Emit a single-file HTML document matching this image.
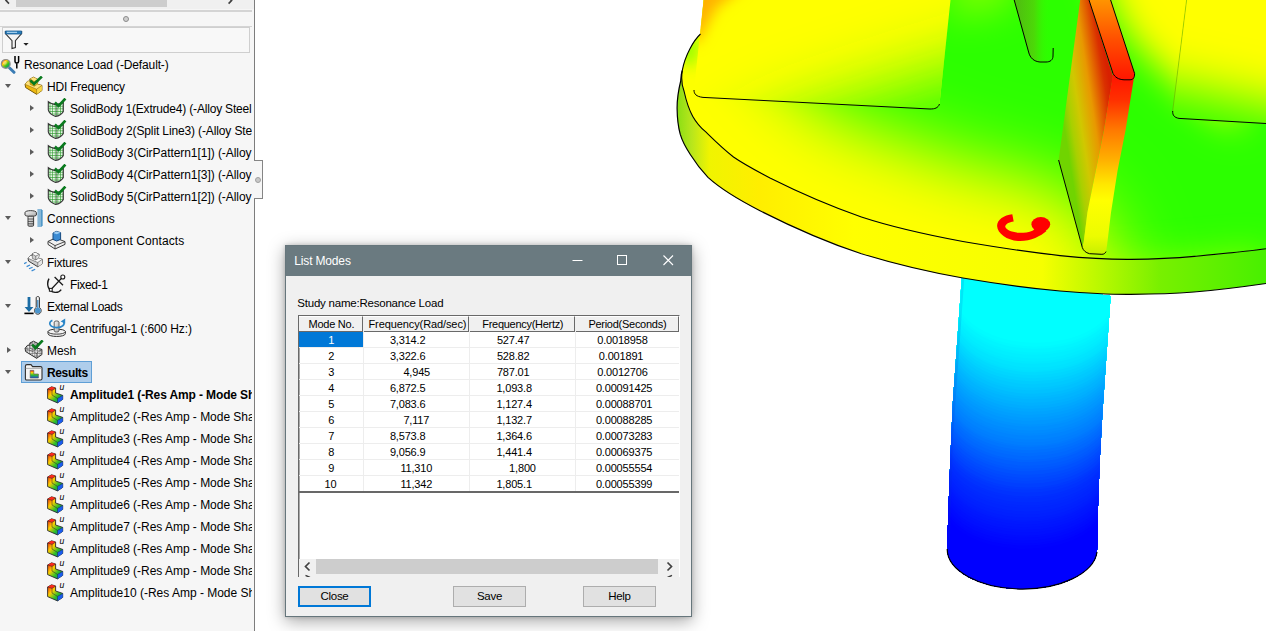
<!DOCTYPE html>
<html lang="en">
<head>
<meta charset="utf-8">
<title>Resonance Load - List Modes</title>
<style>
html,body{margin:0;padding:0;}
body{width:1266px;height:631px;overflow:hidden;background:#fff;position:relative;font-family:"Liberation Sans",sans-serif;color:#000;}
#scene{position:absolute;left:0;top:0;width:1266px;height:631px;}
/* ---------- left panel ---------- */
#panel{position:absolute;left:0;top:0;width:254px;height:631px;background:#f6f6f6;border-right:1px solid #7d7d7d;overflow:hidden;}
#hscroll{position:absolute;left:0;top:0;width:254px;height:9px;background:#f0f0f0;}
#hscroll .thumb{position:absolute;left:16px;top:0;width:151px;height:7px;background:#cdcdcd;}
.hline{position:absolute;left:0;width:252px;height:2px;background:#d4d4d4;}
#grip{position:absolute;left:123px;top:16px;width:4px;height:4px;border:1px solid #8c8c8c;border-radius:50%;background:#cfcfcf;}
#filter{position:absolute;left:2px;top:27px;width:246px;height:24px;border:1px solid #cfcfcf;background:#f8f8f8;}
.row{position:absolute;left:0;width:252px;overflow:hidden;height:22px;line-height:22px;white-space:nowrap;font-size:12px;}
.row .t{position:absolute;top:1px;}
.row .b{font-weight:bold;}
.ic{position:absolute;width:18px;height:18px;}
.exp{position:absolute;width:0;height:0;}
.exp.open{border-left:3.5px solid transparent;border-right:3.5px solid transparent;border-top:4px solid #5c5c5c;}
.exp.closed{border-top:3.5px solid transparent;border-bottom:3.5px solid transparent;border-left:4px solid #5c5c5c;}
#sel{position:absolute;left:21px;top:361px;width:69px;height:20px;background:#aecdeb;border:1px solid #5f9fd6;}
#tab{position:absolute;left:254px;top:160px;width:7.5px;height:37px;background:#f6f6f6;border:1.5px solid #858585;border-left:none;}#tab:after{content:"";position:absolute;left:1px;top:16px;width:4px;height:4px;border-radius:50%;background:#c8c8c8;border:1px solid #a0a0a0;}
/* ---------- dialog ---------- */
#dlg{position:absolute;left:285px;top:245px;width:405px;height:370px;background:#f0f0f0;border:1px solid #66767c;box-shadow:0 4px 16px rgba(0,0,0,.36),0 0 4px rgba(0,0,0,.18);}
#title{position:absolute;left:0;top:0;width:405px;height:30px;background:#6a7a80;color:#fff;font-size:12px;line-height:30px;}
#title span{position:absolute;left:8.3px;top:0;white-space:nowrap;letter-spacing:-.16px;}
#study{position:absolute;left:11.3px;top:50px;font-size:11.5px;line-height:14px;white-space:nowrap;letter-spacing:-.22px;}
#list{position:absolute;left:12px;top:69px;width:380px;height:261px;background:#fff;border-left:1px solid #696969;border-top:1px solid #696969;border-right:1px solid #fff;overflow:hidden;font-size:11px;}
#list:before{content:"";position:absolute;left:0;top:0;width:1px;height:261px;background:#a8a8a8;}
.hd{position:absolute;top:0;height:14px;background:#f0f0f0;border-right:1px solid #696969;border-bottom:1px solid #696969;border-top:1px solid #fff;}
.ht{position:absolute;top:1px;height:14px;line-height:14px;white-space:nowrap;text-align:center;}
.c{position:absolute;height:14px;line-height:14px;white-space:nowrap;letter-spacing:-.17px;}
.c.w{color:#fff;}
.selc{position:absolute;background:#0078d7;}
.rl{position:absolute;left:0;width:380px;height:1px;background:#ededed;}
.cl{position:absolute;top:15px;width:1px;height:160px;background:#ededed;}
.endl{position:absolute;left:0;width:380px;height:1.5px;background:#686868;}
#sb{position:absolute;left:0;top:243px;width:380px;height:18px;background:#f0f0f0;}
#sb .thumb{position:absolute;left:17px;top:0;width:342px;height:14.5px;background:#cdcdcd;}
.btn{position:absolute;height:19px;width:71px;border:1px solid #adadad;background:#e1e1e1;font-size:11.5px;line-height:19px;text-align:center;letter-spacing:-.3px;}
.btn.def{border:2px solid #0078d7;}
</style>
</head>
<body>
<svg id="scene" width="1266" height="631" viewBox="0 0 1266 631">
<!--SCENE-->
<defs>
  <filter id="bl30" filterUnits="userSpaceOnUse" x="400" y="-300" width="1100" height="900"><feGaussianBlur stdDeviation="36"/></filter>
  <filter id="bl18" filterUnits="userSpaceOnUse" x="400" y="-300" width="1100" height="900"><feGaussianBlur stdDeviation="18"/></filter>
  <filter id="bl26" filterUnits="userSpaceOnUse" x="400" y="-300" width="1100" height="900"><feGaussianBlur stdDeviation="26"/></filter>
  <filter id="bl12" filterUnits="userSpaceOnUse" x="400" y="-300" width="1100" height="900"><feGaussianBlur stdDeviation="12"/></filter>
  <filter id="bl8" filterUnits="userSpaceOnUse" x="400" y="-300" width="1100" height="900"><feGaussianBlur stdDeviation="7"/></filter>
  <filter id="bl4" x="-30%" y="-30%" width="160%" height="160%"><feGaussianBlur stdDeviation="3"/></filter>
  <!-- top surface of disc -->
  <clipPath id="cpTop">
    <path id="pTop" d="M700.5,34 C694,40 685,55 682.2,70.8 C681,80 682,86 684,91 C686,100 688,108 692.8,116.4 C696,122 700,127 705.5,131.7 C714,140 723,149 733.5,157 C745,165 757,171 770,178 C800,193 830,206 861.4,217 C895,228 928,235 962.9,241.5 C995,247 1028,252 1060,255.6 C1084,258 1108,259.6 1130.8,259.4 C1152,259.2 1173,258.4 1194.3,256.4 C1218,254.2 1242,252 1266,248.8 L1266,0 L703.6,0 Z"/>
  </clipPath>
  <!-- side (thickness) of disc -->
  <clipPath id="cpSide">
    <path id="pSide" d="M682.2,70.8 C681,74 681,78 680.7,81 C678.5,90 677,100 677.1,108.8 C677.2,118 678,126 680.2,134.2 C682.5,142 686,148 690.3,154.5 C695,162 701,170 708,177.4 C723,191 741,201 760,210.7 C792,227 826,242 861.4,253.8 C895,264 928,272 962.9,278 C995,283.5 1028,288 1060,291 C1084,293 1108,294.6 1130.8,294.4 C1152,294.2 1173,293.6 1194,292 C1218,290 1242,287 1266,283.5 L1266,248.8 C1242,252 1218,254.2 1194.3,256.4 C1173,258.4 1152,259.2 1130.8,259.4 C1108,259.6 1084,258 1060,255.6 C1028,252 995,247 962.9,241.5 C928,235 895,228 861.4,217 C830,206 800,193 770,178 C757,171 745,165 733.5,157 C723,149 714,140 705.5,131.7 C700,127 696,122 692.8,116.4 C688,108 686,100 684,91 C682,86 681,80 682.2,70.8 Z"/>
  </clipPath>
  <clipPath id="cpLBlock"><path id="pLBlock" d="M703.6,0 L694,90 C694,94 696,96.5 703,97.4 L930,109 C935,109 938,108 939.5,104 L950.5,0 Z"/></clipPath>
  <clipPath id="cpRBlock"><path id="pRBlock" d="M1186.6,0 L1172.7,111 C1172.5,115 1174,117.5 1179,118.4 L1266,123.5 L1266,0 Z"/></clipPath>
  <clipPath id="cpCyl"><path id="pCyl" d="M962,275 L953,400 Q949.6,470 947.2,549 A75,40 0 0 0 1097,552 Q1098,480 1102.6,410 L1110.6,296 Z"/></clipPath>
  <linearGradient id="gCyl" gradientUnits="userSpaceOnUse" x1="0" y1="280" x2="0" y2="590">
    <stop offset="0" stop-color="#00ffff"/>
    <stop offset="0.17" stop-color="#00f4ff"/>
    <stop offset="0.29" stop-color="#00c8ff"/>
    <stop offset="0.41" stop-color="#0090ff"/>
    <stop offset="0.56" stop-color="#0058ff"/>
    <stop offset="0.70" stop-color="#0030ff"/>
    <stop offset="0.88" stop-color="#0004ff"/>
    <stop offset="1" stop-color="#0000ff"/>
  </linearGradient>
  <linearGradient id="gCylEdge" gradientUnits="userSpaceOnUse" x1="948" y1="0" x2="1108" y2="0">
    <stop offset="0" stop-color="#0030ff" stop-opacity=".55"/>
    <stop offset="0.22" stop-color="#0030ff" stop-opacity="0"/>
    <stop offset="0.8" stop-color="#0030ff" stop-opacity="0"/>
    <stop offset="1" stop-color="#0030ff" stop-opacity=".35"/>
  </linearGradient>
  <linearGradient id="gSide" gradientUnits="userSpaceOnUse" x1="677" y1="0" x2="1266" y2="0">
    <stop offset="0" stop-color="#8ade14"/>
    <stop offset="0.025" stop-color="#b8e61c"/>
    <stop offset="0.055" stop-color="#f0f400"/>
    <stop offset="0.14" stop-color="#ffee00"/>
    <stop offset="0.3" stop-color="#ffff00"/>
    <stop offset="0.62" stop-color="#f6ff00"/>
    <stop offset="0.72" stop-color="#b8f800"/>
    <stop offset="0.82" stop-color="#78f000"/>
    <stop offset="1" stop-color="#48f000"/>
  </linearGradient>
  <linearGradient id="gFinSide" gradientUnits="userSpaceOnUse" x1="1060" y1="100" x2="1111" y2="92">
    <stop offset="0" stop-color="#70d400"/>
    <stop offset="0.15" stop-color="#a8d000"/>
    <stop offset="0.33" stop-color="#d0c800"/>
    <stop offset="0.6" stop-color="#e89800"/>
    <stop offset="0.76" stop-color="#e26000"/>
    <stop offset="0.9" stop-color="#da3000"/>
    <stop offset="1" stop-color="#d82000"/>
  </linearGradient>
  <linearGradient id="gFinFront" gradientUnits="userSpaceOnUse" x1="0" y1="76" x2="0" y2="254">
    <stop offset="0" stop-color="#ff1400"/>
    <stop offset="0.135" stop-color="#ff3000"/>
    <stop offset="0.30" stop-color="#ff7800"/>
    <stop offset="0.47" stop-color="#ffb000"/>
    <stop offset="0.61" stop-color="#ffe800"/>
    <stop offset="0.70" stop-color="#ffff00"/>
    <stop offset="0.9" stop-color="#ecfc00"/>
    <stop offset="1" stop-color="#c8f000"/>
  </linearGradient>
  <linearGradient id="gFinTop" gradientUnits="userSpaceOnUse" x1="0" y1="0" x2="0" y2="78">
    <stop offset="0" stop-color="#ff9400"/>
    <stop offset="0.5" stop-color="#ff5000"/>
    <stop offset="1" stop-color="#ff1800"/>
  </linearGradient>
  <linearGradient id="gBackFin" gradientUnits="userSpaceOnUse" x1="1018" y1="0" x2="1050" y2="0">
    <stop offset="0" stop-color="#50c010"/>
    <stop offset="0.5" stop-color="#4cd808"/>
    <stop offset="1" stop-color="#30ff00" stop-opacity="0"/>
  </linearGradient>
</defs>

<!-- cylinder (stem) -->
<g clip-path="url(#cpCyl)">
  <rect x="940" y="270" width="180" height="330" fill="#00ffff"/>
  <path d="M959.1,222.0 A80.7,50.0 0 0 0 1120.2,225.0 L1130,640 L930,640 Z" fill="#00ffff"/>
  <path d="M958.9,225.0 A80.7,50.0 0 0 0 1120.1,228.0 L1130,640 L930,640 Z" fill="#00ffff"/>
  <path d="M958.8,228.0 A80.7,50.0 0 0 0 1119.9,231.0 L1130,640 L930,640 Z" fill="#00ffff"/>
  <path d="M958.6,231.0 A80.7,50.0 0 0 0 1119.8,234.0 L1130,640 L930,640 Z" fill="#00ffff"/>
  <path d="M958.4,234.0 A80.7,50.0 0 0 0 1119.6,237.0 L1130,640 L930,640 Z" fill="#00ffff"/>
  <path d="M958.3,237.0 A80.7,50.0 0 0 0 1119.4,240.0 L1130,640 L930,640 Z" fill="#00ffff"/>
  <path d="M958.1,240.0 A80.7,50.0 0 0 0 1119.3,243.0 L1130,640 L930,640 Z" fill="#00ffff"/>
  <path d="M957.9,243.0 A80.7,50.0 0 0 0 1119.1,246.0 L1130,640 L930,640 Z" fill="#00ffff"/>
  <path d="M957.8,246.0 A80.7,50.0 0 0 0 1119.0,249.0 L1130,640 L930,640 Z" fill="#00ffff"/>
  <path d="M957.6,249.0 A80.8,50.0 0 0 0 1118.8,252.0 L1130,640 L930,640 Z" fill="#00ffff"/>
  <path d="M957.4,252.0 A80.8,50.0 0 0 0 1118.7,255.0 L1130,640 L930,640 Z" fill="#00ffff"/>
  <path d="M957.3,255.0 A80.8,50.0 0 0 0 1118.5,258.0 L1130,640 L930,640 Z" fill="#00ffff"/>
  <path d="M957.1,258.0 A80.8,50.0 0 0 0 1118.3,261.0 L1130,640 L930,640 Z" fill="#00ffff"/>
  <path d="M956.9,261.0 A80.8,50.0 0 0 0 1118.2,264.0 L1130,640 L930,640 Z" fill="#00ffff"/>
  <path d="M956.8,264.0 A80.8,50.0 0 0 0 1118.0,267.0 L1130,640 L930,640 Z" fill="#00ffff"/>
  <path d="M956.6,267.0 A80.8,50.0 0 0 0 1117.9,270.0 L1130,640 L930,640 Z" fill="#00ffff"/>
  <path d="M956.4,270.0 A80.8,50.0 0 0 0 1117.7,273.0 L1130,640 L930,640 Z" fill="#00ffff"/>
  <path d="M956.3,273.0 A80.8,50.0 0 0 0 1117.5,276.0 L1130,640 L930,640 Z" fill="#00ffff"/>
  <path d="M956.1,276.0 A80.8,50.0 0 0 0 1117.4,279.0 L1130,640 L930,640 Z" fill="#00ffff"/>
  <path d="M955.9,279.0 A80.8,50.0 0 0 0 1117.2,282.0 L1130,640 L930,640 Z" fill="#00ffff"/>
  <path d="M955.8,282.0 A80.8,50.0 0 0 0 1117.1,285.0 L1130,640 L930,640 Z" fill="#00ffff"/>
  <path d="M955.6,285.0 A80.8,50.0 0 0 0 1116.9,288.0 L1130,640 L930,640 Z" fill="#00ffff"/>
  <path d="M955.4,288.0 A80.8,50.0 0 0 0 1116.8,291.0 L1130,640 L930,640 Z" fill="#00ffff"/>
  <path d="M955.3,291.0 A80.8,50.0 0 0 0 1116.6,294.0 L1130,640 L930,640 Z" fill="#00ffff"/>
  <path d="M955.1,294.0 A80.8,50.0 0 0 0 1116.4,297.0 L1130,640 L930,640 Z" fill="#00fcff"/>
  <path d="M954.9,297.0 A80.8,50.0 0 0 0 1116.3,300.0 L1130,640 L930,640 Z" fill="#00f9ff"/>
  <path d="M954.8,300.0 A80.8,50.0 0 0 0 1116.1,303.0 L1130,640 L930,640 Z" fill="#00f5ff"/>
  <path d="M954.6,303.0 A80.8,50.0 0 0 0 1116.0,306.0 L1130,640 L930,640 Z" fill="#00f2ff"/>
  <path d="M954.5,306.0 A80.8,50.0 0 0 0 1115.8,309.0 L1130,640 L930,640 Z" fill="#00efff"/>
  <path d="M954.3,309.0 A80.8,50.0 0 0 0 1115.7,312.0 L1130,640 L930,640 Z" fill="#00ecff"/>
  <path d="M954.1,312.0 A80.8,50.0 0 0 0 1115.5,315.0 L1130,640 L930,640 Z" fill="#00e9ff"/>
  <path d="M954.0,315.0 A80.8,50.0 0 0 0 1115.3,318.0 L1130,640 L930,640 Z" fill="#00e5ff"/>
  <path d="M953.8,318.0 A80.8,50.0 0 0 0 1115.2,321.0 L1130,640 L930,640 Z" fill="#00e2ff"/>
  <path d="M953.6,321.0 A80.8,50.0 0 0 0 1115.0,324.0 L1130,640 L930,640 Z" fill="#00dfff"/>
  <path d="M953.5,324.0 A80.9,50.0 0 0 0 1114.9,327.0 L1130,640 L930,640 Z" fill="#00daff"/>
  <path d="M953.3,327.0 A80.9,50.0 0 0 0 1114.7,330.0 L1130,640 L930,640 Z" fill="#00d6ff"/>
  <path d="M953.1,330.0 A80.9,50.0 0 0 0 1114.5,333.0 L1130,640 L930,640 Z" fill="#00d2ff"/>
  <path d="M953.0,333.0 A80.9,50.0 0 0 0 1114.4,336.0 L1130,640 L930,640 Z" fill="#00cdff"/>
  <path d="M952.8,336.0 A80.9,50.0 0 0 0 1114.2,339.0 L1130,640 L930,640 Z" fill="#00c9ff"/>
  <path d="M952.6,339.0 A80.9,50.0 0 0 0 1114.1,342.0 L1130,640 L930,640 Z" fill="#00c5ff"/>
  <path d="M952.5,342.0 A80.9,50.0 0 0 0 1113.9,345.0 L1130,640 L930,640 Z" fill="#00c1ff"/>
  <path d="M952.3,345.0 A80.9,50.0 0 0 0 1113.8,348.0 L1130,640 L930,640 Z" fill="#00bcff"/>
  <path d="M952.1,348.0 A80.9,50.0 0 0 0 1113.6,351.0 L1130,640 L930,640 Z" fill="#00b8ff"/>
  <path d="M952.0,351.0 A80.9,50.0 0 0 0 1113.4,354.0 L1130,640 L930,640 Z" fill="#00b4ff"/>
  <path d="M951.8,354.0 A80.9,50.0 0 0 0 1113.3,357.0 L1130,640 L930,640 Z" fill="#00b0ff"/>
  <path d="M951.6,357.0 A80.9,50.0 0 0 0 1113.1,360.0 L1130,640 L930,640 Z" fill="#00acff"/>
  <path d="M951.5,360.0 A80.9,50.0 0 0 0 1113.0,363.0 L1130,640 L930,640 Z" fill="#00a7ff"/>
  <path d="M951.3,363.0 A80.9,50.0 0 0 0 1112.8,366.0 L1130,640 L930,640 Z" fill="#00a3ff"/>
  <path d="M951.1,366.0 A80.9,50.0 0 0 0 1112.6,369.0 L1130,640 L930,640 Z" fill="#009fff"/>
  <path d="M951.0,369.0 A80.9,50.0 0 0 0 1112.5,372.0 L1130,640 L930,640 Z" fill="#009bff"/>
  <path d="M950.8,372.0 A80.9,50.0 0 0 0 1112.3,375.0 L1130,640 L930,640 Z" fill="#0097ff"/>
  <path d="M950.6,375.0 A80.9,50.0 0 0 0 1112.2,378.0 L1130,640 L930,640 Z" fill="#0093ff"/>
  <path d="M950.5,378.0 A80.9,50.0 0 0 0 1112.0,381.0 L1130,640 L930,640 Z" fill="#008fff"/>
  <path d="M950.3,381.0 A80.9,50.0 0 0 0 1111.9,384.0 L1130,640 L930,640 Z" fill="#008bff"/>
  <path d="M950.1,384.0 A80.9,50.0 0 0 0 1111.7,387.0 L1130,640 L930,640 Z" fill="#0088ff"/>
  <path d="M950.0,387.0 A80.9,50.0 0 0 0 1111.5,390.0 L1130,640 L930,640 Z" fill="#0084ff"/>
  <path d="M949.8,390.0 A80.9,50.0 0 0 0 1111.4,393.0 L1130,640 L930,640 Z" fill="#0080ff"/>
  <path d="M949.6,393.0 A80.9,50.0 0 0 0 1111.2,396.0 L1130,640 L930,640 Z" fill="#007dff"/>
  <path d="M949.5,396.0 A80.9,50.0 0 0 0 1111.1,399.0 L1130,640 L930,640 Z" fill="#0079ff"/>
  <path d="M949.3,399.0 A81.0,50.0 0 0 0 1110.9,402.0 L1130,640 L930,640 Z" fill="#0075ff"/>
  <path d="M949.1,402.0 A81.0,50.0 0 0 0 1110.7,405.0 L1130,640 L930,640 Z" fill="#0070ff"/>
  <path d="M949.0,405.0 A81.0,50.0 0 0 0 1110.6,408.0 L1130,640 L930,640 Z" fill="#006cff"/>
  <path d="M948.8,408.0 A81.0,50.0 0 0 0 1110.4,411.0 L1130,640 L930,640 Z" fill="#0068ff"/>
  <path d="M948.6,411.0 A81.0,50.0 0 0 0 1110.3,414.0 L1130,640 L930,640 Z" fill="#0063ff"/>
  <path d="M948.5,414.0 A81.0,50.0 0 0 0 1110.1,417.0 L1130,640 L930,640 Z" fill="#005eff"/>
  <path d="M948.3,417.0 A81.0,50.0 0 0 0 1110.0,420.0 L1130,640 L930,640 Z" fill="#005aff"/>
  <path d="M948.1,420.0 A81.0,50.0 0 0 0 1109.8,423.0 L1130,640 L930,640 Z" fill="#0056ff"/>
  <path d="M948.0,423.0 A81.0,50.0 0 0 0 1109.6,426.0 L1130,640 L930,640 Z" fill="#0051ff"/>
  <path d="M947.8,426.0 A81.0,50.0 0 0 0 1109.5,429.0 L1130,640 L930,640 Z" fill="#004cff"/>
  <path d="M947.6,429.0 A81.0,50.0 0 0 0 1109.3,432.0 L1130,640 L930,640 Z" fill="#0048ff"/>
  <path d="M947.5,432.0 A81.0,50.0 0 0 0 1109.2,435.0 L1130,640 L930,640 Z" fill="#0044ff"/>
  <path d="M947.3,435.0 A81.0,50.0 0 0 0 1109.0,438.0 L1130,640 L930,640 Z" fill="#003fff"/>
  <path d="M947.1,438.0 A81.0,50.0 0 0 0 1108.9,441.0 L1130,640 L930,640 Z" fill="#003aff"/>
  <path d="M947.0,441.0 A81.0,50.0 0 0 0 1108.7,444.0 L1130,640 L930,640 Z" fill="#0036ff"/>
  <path d="M946.8,444.0 A81.0,50.0 0 0 0 1108.5,447.0 L1130,640 L930,640 Z" fill="#0032ff"/>
  <path d="M946.6,447.0 A81.0,50.0 0 0 0 1108.4,450.0 L1130,640 L930,640 Z" fill="#002eff"/>
  <path d="M946.5,450.0 A81.0,50.0 0 0 0 1108.2,453.0 L1130,640 L930,640 Z" fill="#002cff"/>
  <path d="M946.3,453.0 A81.0,50.0 0 0 0 1108.1,456.0 L1130,640 L930,640 Z" fill="#0029ff"/>
  <path d="M946.1,456.0 A81.0,50.0 0 0 0 1107.9,459.0 L1130,640 L930,640 Z" fill="#0027ff"/>
  <path d="M946.0,459.0 A81.0,50.0 0 0 0 1107.7,462.0 L1130,640 L930,640 Z" fill="#0025ff"/>
  <path d="M945.8,462.0 A81.0,50.0 0 0 0 1107.6,465.0 L1130,640 L930,640 Z" fill="#0022ff"/>
  <path d="M945.6,465.0 A81.0,50.0 0 0 0 1107.4,468.0 L1130,640 L930,640 Z" fill="#0020ff"/>
  <path d="M945.5,468.0 A81.0,50.0 0 0 0 1107.3,471.0 L1130,640 L930,640 Z" fill="#001dff"/>
  <path d="M945.3,471.0 A81.0,49.9 0 0 0 1107.1,474.0 L1130,640 L930,640 Z" fill="#001bff"/>
  <path d="M945.2,474.0 A81.1,49.5 0 0 0 1107.0,477.0 L1130,640 L930,640 Z" fill="#0018ff"/>
  <path d="M945.0,477.0 A81.1,49.1 0 0 0 1106.8,480.0 L1130,640 L930,640 Z" fill="#0016ff"/>
  <path d="M944.8,480.0 A81.1,48.8 0 0 0 1106.6,483.0 L1130,640 L930,640 Z" fill="#0014ff"/>
  <path d="M944.7,483.0 A81.1,48.4 0 0 0 1106.5,486.0 L1130,640 L930,640 Z" fill="#0011ff"/>
  <path d="M944.5,486.0 A81.1,48.0 0 0 0 1106.3,489.0 L1130,640 L930,640 Z" fill="#000fff"/>
  <path d="M944.3,489.0 A81.1,47.6 0 0 0 1106.2,492.0 L1130,640 L930,640 Z" fill="#000cff"/>
  <path d="M944.2,492.0 A81.1,47.2 0 0 0 1106.0,495.0 L1130,640 L930,640 Z" fill="#000aff"/>
  <path d="M944.0,495.0 A81.1,46.9 0 0 0 1105.8,498.0 L1130,640 L930,640 Z" fill="#0007ff"/>
  <path d="M943.8,498.0 A81.1,46.5 0 0 0 1105.7,501.0 L1130,640 L930,640 Z" fill="#0005ff"/>
  <path d="M943.7,501.0 A81.1,46.1 0 0 0 1105.5,504.0 L1130,640 L930,640 Z" fill="#0002ff"/>
  <path d="M943.5,504.0 A81.1,45.8 0 0 0 1105.4,507.0 L1130,640 L930,640 Z" fill="#0000ff"/>
  <path d="M943.3,507.0 A81.1,45.4 0 0 0 1105.2,510.0 L1130,640 L930,640 Z" fill="#0000ff"/>
  <path d="M943.2,510.0 A81.1,45.0 0 0 0 1105.1,513.0 L1130,640 L930,640 Z" fill="#0000ff"/>
  <path d="M943.0,513.0 A81.1,44.6 0 0 0 1104.9,516.0 L1130,640 L930,640 Z" fill="#0000ff"/>
  <path d="M942.8,516.0 A81.1,44.2 0 0 0 1104.7,519.0 L1130,640 L930,640 Z" fill="#0000ff"/>
  <path d="M942.7,519.0 A81.1,43.9 0 0 0 1104.6,522.0 L1130,640 L930,640 Z" fill="#0000ff"/>
  <path d="M942.5,522.0 A81.1,43.5 0 0 0 1104.4,525.0 L1130,640 L930,640 Z" fill="#0000ff"/>
  <path d="M942.3,525.0 A81.1,43.1 0 0 0 1104.3,528.0 L1130,640 L930,640 Z" fill="#0000ff"/>
  <path d="M942.2,528.0 A81.1,42.8 0 0 0 1104.1,531.0 L1130,640 L930,640 Z" fill="#0000ff"/>
  <path d="M942.0,531.0 A81.1,42.4 0 0 0 1103.9,534.0 L1130,640 L930,640 Z" fill="#0000ff"/>
  <path d="M941.8,534.0 A81.1,42.0 0 0 0 1103.8,537.0 L1130,640 L930,640 Z" fill="#0000ff"/>
  <path d="M941.7,537.0 A81.1,41.6 0 0 0 1103.6,540.0 L1130,640 L930,640 Z" fill="#0000ff"/>
  <path d="M941.5,540.0 A81.1,41.2 0 0 0 1103.5,543.0 L1130,640 L930,640 Z" fill="#0000ff"/>
  <path d="M941.3,543.0 A81.1,40.9 0 0 0 1103.3,546.0 L1130,640 L930,640 Z" fill="#0000ff"/>
  <path d="M941.2,546.0 A81.1,40.5 0 0 0 1103.2,549.0 L1130,640 L930,640 Z" fill="#0000ff"/>
  <path d="M941.0,549.0 A81.2,40.1 0 0 0 1103.0,552.0 L1130,640 L930,640 Z" fill="#0000ff"/>
  <path d="M940.8,552.0 A81.2,40.0 0 0 0 1102.8,555.0 L1130,640 L930,640 Z" fill="#0000ff"/>
  <path d="M940.7,555.0 A81.2,40.0 0 0 0 1102.7,558.0 L1130,640 L930,640 Z" fill="#0000ff"/>
  <path d="M940.5,558.0 A81.2,40.0 0 0 0 1102.5,561.0 L1130,640 L930,640 Z" fill="#0000ff"/>
  <path d="M962,275 L950.3,440 L947.2,549" fill="none" stroke="#0040c0" stroke-width="5" opacity=".13"/>
</g>
<path d="M947.2,549 A75,40 0 0 0 1097,552" fill="none" stroke="#000" stroke-width="1.2"/>

<!-- disc side -->
<g clip-path="url(#cpSide)">
  <rect x="670" y="60" width="600" height="240" fill="url(#gSide)"/>
</g>

<!-- disc top -->
<g clip-path="url(#cpTop)">
  <rect x="670" y="0" width="600" height="270" fill="#2cff00"/>
  <!-- yellow zone lower-left -->
  <path filter="url(#bl30)" fill="#ffff00" d="M560,-80 L690,-40 L780,70 L838,117 L902,139 L965,163 L1005,170 L1076,194 L1108,236 L1122,300 L1110,360 L560,360 Z"/>
  <!-- green sliver left of block -->
  <ellipse filter="url(#bl8)" cx="689" cy="50" rx="7" ry="16" fill="#60ff00" opacity=".8"/>
  <!-- yellowish tint bottom right edge -->
  <path filter="url(#bl18)" fill="#d8ff00" opacity=".5" d="M1060,266 L1140,262 L1266,250 L1266,300 L1060,300 Z"/>
  <!-- yellow at top between fins -->
  <path filter="url(#bl18)" fill="#ffff00" d="M1090,-70 L1240,-70 L1240,130 L1185,92 L1151,61 L1125,32 L1108,-4 Z"/>
  <path filter="url(#bl18)" fill="#b0ff00" opacity=".6" d="M950,-40 L1020,-40 L1010,8 L950,20 Z"/>
</g>

<!-- left block -->
<g clip-path="url(#cpLBlock)">
  <rect x="690" y="0" width="270" height="112" fill="#ffff00"/>
  <path filter="url(#bl30)" fill="#38ff00" d="M1110,24 L959,68 L810,116 L753,141 L710,186 L670,374 L1110,374 Z"/>
  <path filter="url(#bl8)" fill="#ffb000" d="M690,-14 L745,-14 L716,8 L698,42 L690,42 Z"/>
</g>

<!-- right block -->
<g clip-path="url(#cpRBlock)">
  <rect x="1170" y="0" width="100" height="126" fill="#34ff00"/>
  <path filter="url(#bl26)" fill="#ffff00" d="M1100,-120 L1400,-120 L1400,134 L1266,106 L1172,86 L1100,70 Z"/>
</g>
<path d="M1186.6,0 L1172.7,111" fill="none" stroke="#6a9000" stroke-width=".8" opacity=".55"/>

<!-- small back fin -->
<path d="M1014.2,0 L1028.6,52 C1030,58 1034,61.5 1040,62 L1046,62 C1050,62 1053,60 1053,56 L1053,0 Z" fill="url(#gBackFin)"/>
<path d="M1014.2,0 L1028.6,52 C1030,58 1034,61.5 1040,62 L1046,62 C1050,62 1053,60 1053,56 L1053.2,48" fill="none" stroke="#000" stroke-width="1"/>

<!-- main fin -->
<path d="M1080.2,0 L1062.7,130 L1058.6,160 L1082.3,247.5 L1088,250 L1084,240 L1087.4,212.5 L1095.7,171 L1104,130 L1113,76 L1089,0 Z" fill="url(#gFinSide)"/>
<path d="M1113,73.5 L1134.6,73.5 L1125.6,130 L1117.5,171 L1111,212.5 L1107,245.5 L1106,251.6 C1105,253.6 1104,254.2 1101.9,254.3 L1089.5,253.7 C1085.6,252.6 1083.4,250.6 1082.3,247.5 L1084,240 L1087.4,212.5 L1095.7,171 L1104,130 Z" fill="url(#gFinFront)"/>
<path d="M1089,0 L1113,73.5 C1115,77 1118,79.5 1124,79.8 L1130,79.8 C1133,79.8 1134.6,78 1134.6,73.5 L1110.6,0 Z" fill="url(#gFinTop)"/>
<path d="M1089,0 L1113,73.5 C1115,77 1118,79.5 1124,79.8 L1130,79.8 C1133,79.8 1134.6,78 1134.6,73.5 L1110.6,0" fill="none" stroke="#000" stroke-width="1"/>
<path d="M1058.6,160 L1082.3,247.5 C1083.4,250.6 1085.6,252.6 1089.5,253.7 L1101.9,254.3 C1104,254.2 1105,253.6 1106,251.6" fill="none" stroke="#000" stroke-width="1"/>

<!-- outlines -->

<path d="M694,90 C694,94 696,96.5 703,97.4 L930,109 C935,109 938,108 939.5,104" fill="none" stroke="#000" stroke-width="1"/>
<path d="M1172.7,111 C1172.5,115 1174,117.5 1179,118.4 L1266,123.5" fill="none" stroke="#000" stroke-width="1"/>
<path d="M700.5,34 C694,40 685,55 682.2,70.8 C681,80 682,86 684,91 C686,100 688,108 692.8,116.4 C696,122 700,127 705.5,131.7 C714,140 723,149 733.5,157 C745,165 757,171 770,178 C800,193 830,206 861.4,217 C895,228 928,235 962.9,241.5 C995,247 1028,252 1060,255.6 C1084,258 1108,259.6 1130.8,259.4 C1152,259.2 1173,258.4 1194.3,256.4 C1218,254.2 1242,252 1266,248.8" fill="none" stroke="#000" stroke-width="1.1"/>
<path d="M682.2,70.8 C681,74 681,78 680.7,81 C678.5,90 677,100 677.1,108.8 C677.2,118 678,126 680.2,134.2 C682.5,142 686,148 690.3,154.5 C695,162 701,170 708,177.4 C723,191 741,201 760,210.7 C792,227 826,242 861.4,253.8 C895,264 928,272 962.9,278 C995,283.5 1028,288 1060,291 C1084,293 1108,294.6 1130.8,294.4 C1152,294.2 1173,293.6 1194,292 C1218,290 1242,287 1266,283.5" fill="none" stroke="#000" stroke-width="1.2"/>

<!-- red marker -->
<path d="M1012.3,214.3 C1004,215 997,220 997.1,226 C997.5,234 1008,241 1020,241 C1031,241 1041,236 1046.5,231 L1040,224 L1033,230.4 C1028,232.5 1023,233 1018,232.8 C1011,232 1005.5,229.5 1005.2,226.6 C1005.5,224 1009,222 1013.7,221.4 Z" fill="#ff0000"/>
<ellipse cx="1040.8" cy="224.3" rx="9.4" ry="7.2" fill="#ff0000"/>

</svg>

<div id="panel">
<!--PANEL-->
<svg width="0" height="0" style="position:absolute">
<defs>
  <linearGradient id="rb" x1="0" y1="0" x2="0" y2="1">
    <stop offset="0" stop-color="#f01818"/><stop offset=".3" stop-color="#ffd800"/><stop offset=".6" stop-color="#30c030"/><stop offset="1" stop-color="#1850e0"/>
  </linearGradient>
  <linearGradient id="rb2" x1="0" y1="0" x2="1" y2="1">
    <stop offset="0" stop-color="#f01010"/><stop offset=".35" stop-color="#ffd000"/><stop offset=".65" stop-color="#28c028"/><stop offset="1" stop-color="#1058e8"/>
  </linearGradient>
  <linearGradient id="gy" x1="0" y1="0" x2="1" y2="1"><stop offset="0" stop-color="#f8f8f8"/><stop offset="1" stop-color="#a8a8a8"/></linearGradient>
  <pattern id="gm" width="2.6" height="2.6" patternUnits="userSpaceOnUse"><rect width="2.6" height="2.6" fill="#2a982a"/><rect x=".6" y=".6" width="2" height="2" fill="#e6f6e6"/></pattern>
  <pattern id="km" width="2.6" height="2.6" patternUnits="userSpaceOnUse"><rect width="2.6" height="2.6" fill="#6a6a6a"/><rect x=".6" y=".6" width="2" height="2" fill="#ececec"/></pattern>
  <symbol id="iStudy" viewBox="0 0 22 20">
    <path d="M9.6,14 L14,18.3" stroke="#3a7cb4" stroke-width="3" stroke-linecap="round"/>
    <circle cx="5.75" cy="9.9" r="4.4" fill="url(#rb2)" stroke="#8e8e8e" stroke-width="1.2"/>
    <circle cx="4.8" cy="8.8" r="2" fill="#fff" opacity=".35"/>
    <path d="M15,2 V7.6 C15,9.6 18.6,9.6 18.6,7.6 V2 M16.8,9.2 V14.6" fill="none" stroke="#000" stroke-width="1.5"/>
  </symbol>
  <symbol id="iPart" viewBox="0 0 20 20">
    <path d="M1.1,8.3 L3.4,5.4 L6,4.8 L5.8,3.1 L9.5,1.2 L14.2,3.6 L13.4,8.2 L17.9,9.4 L17.9,14.6 L12.6,18.3 L1.6,11.5 Z" fill="#eeb80e" stroke="#7a5a08" stroke-width="1"/>
    <path d="M5.8,3.1 L9.5,1.2 L14.2,3.6 L10.2,5.6 Z M1.1,8.3 L3.4,5.4 L6,4.8 L6.2,8.4 L10.2,10.2 L13.4,8.2 L17.9,9.4 L12.6,13.2 Z" fill="#ffe27a"/>
    <path d="M12.6,13.2 L17.9,9.4 L17.9,14.6 L12.6,18.3 Z M10.2,5.6 L14.2,3.6 L13.4,8.2 L10.2,10.2 Z" fill="#f8d648"/>
    <path d="M5.8,3.1 L10.2,5.6 L14.2,3.6 M10.2,5.6 V10.2 M6,4.8 L6.2,8.4 L10.2,10.2 L13.4,8.2 M1.1,8.3 L12.6,13.2 L17.9,9.4 M12.6,13.2 V18.3" fill="none" stroke="#7a5a08" stroke-width=".6" opacity=".8"/>
    <path d="M6.3,4.6 L10,7.9 L17.9,0.6" fill="none" stroke="#0a7a1e" stroke-width="2.7"/>
  </symbol>
  <symbol id="iBody" viewBox="0 0 20 20">
    <path d="M1.3,3.6 C3.6,5.6 7.4,6.6 9.6,6.6 L16.3,4.4 L16.3,13.6 C14.6,16.4 11,18 8.6,18.4 C5,17 1.8,14.6 1.3,11.8 Z" fill="url(#gm)" stroke="#363636" stroke-width="1.1"/>
    <path d="M9.6,6.6 V18" stroke="#363636" stroke-width=".7" opacity=".7"/>
    <path d="M7.9,4.6 L11.6,7.9 L18.4,0.6" fill="none" stroke="#0a7a1e" stroke-width="2.7"/>
  </symbol>
  <symbol id="iConn" viewBox="0 0 20 20">
    <path d="M1,4.6 C1,2 12.4,2 12.4,4.6 V7 C12.4,8.8 1,8.8 1,7 Z" fill="url(#gy)" stroke="#3a3a3a"/>
    <rect x="4" y="8.2" width="5.6" height="10" rx="1" fill="url(#gy)" stroke="#3a3a3a"/>
    <path d="M4,11 H9.6 M4,13.4 H9.6 M4,15.8 H9.6" stroke="#3a3a3a" stroke-width=".8"/>
    <path d="M13.4,2 H18 M18,2 V18 M13.4,4 H18 M13.4,6 H18 M13.4,8 H18 M13.4,10 H18 M13.4,12 H18 M13.4,14 H18 M13.4,16 H18 M13.4,18 H18" stroke="#1878b8" stroke-width="1"/>
  </symbol>
  <symbol id="iContact" viewBox="0 0 20 20">
    <path d="M1,11.4 L8.6,8 L18,11.6 L18,14.4 L8,19 L1,14.4 Z" fill="#f0f0f0" stroke="#3a3a3a"/>
    <path d="M1,11.4 L8,15.6 L18,11.6 M8,15.6 V19" fill="none" stroke="#3a3a3a" stroke-width=".9"/>
    <path d="M6,3 L9.4,1.4 L13.6,2.6 L13.6,9.4 L9.6,11 L6,9.4 Z" fill="#3a8ad2" stroke="#174a80"/>
    <path d="M6,3 L9.4,1.4 L13.6,2.6 L9.8,4.2 Z" fill="#9accf4"/>
  </symbol>
  <symbol id="iFixt" viewBox="0 0 20 20">
    <path d="M0,11.6 L2.6,10.4 M2.6,14.6 L6,13 M5,16.8 L8.6,15.2 M7.6,18.9 L11.2,17.2" stroke="#3a8ad2" stroke-width="1.2"/>
    <g transform="translate(3.2,-0.6) scale(.84)">
    <path d="M1.1,8.3 L3.4,5.4 L6,4.8 L5.8,3.1 L9.5,1.2 L14.2,3.6 L13.4,8.2 L17.9,9.4 L17.9,14.6 L12.6,18.3 L1.6,11.5 Z" fill="#cfcfcf" stroke="#2e2e2e" stroke-width="1.1"/>
    <path d="M5.8,3.1 L9.5,1.2 L14.2,3.6 L10.2,5.6 Z M1.1,8.3 L3.4,5.4 L6,4.8 L6.2,8.4 L10.2,10.2 L13.4,8.2 L17.9,9.4 L12.6,13.2 Z" fill="#fbfbfb"/>
    <path d="M12.6,13.2 L17.9,9.4 L17.9,14.6 L12.6,18.3 Z M10.2,5.6 L14.2,3.6 L13.4,8.2 L10.2,10.2 Z" fill="#e6e6e6"/>
    <path d="M5.8,3.1 L10.2,5.6 L14.2,3.6 M10.2,5.6 V10.2 M6,4.8 L6.2,8.4 L10.2,10.2 L13.4,8.2 M1.1,8.3 L12.6,13.2 L17.9,9.4 M12.6,13.2 V18.3" fill="none" stroke="#2e2e2e" stroke-width=".7" opacity=".8"/>
    </g>
  </symbol>
  <symbol id="iFixed" viewBox="0 0 20 20">
    <path d="M2,4.6 C-0.8,10 1,17.6 8,18.4 C11,18.6 13,17.4 14.2,15.6" fill="none" stroke="#1a1a1a" stroke-width="1.4"/>
    <path d="M14.4,4.4 L3.8,15.8 M7.6,3 L16,11.2" stroke="#1a1a1a" stroke-width="1.3"/>
    <circle cx="15.8" cy="3" r="2" fill="#fff" stroke="#1a1a1a" stroke-width="1.1"/>
    <rect x="2.4" y="14.4" width="2.8" height="2.8" fill="#fff" stroke="#1a1a1a" stroke-width="1"/>
  </symbol>
  <symbol id="iLoads" viewBox="0 0 20 20">
    <path d="M3.6,1 H6.4 V11 H9.4 L5,16 L0.6,11 H3.6 Z" fill="#1b6ca4"/>
    <path d="M0.4,17.4 H9.6" stroke="#000" stroke-width="1.6"/>
    <path d="M12.2,2 C12.2,0 15.4,0 15.4,2 V11.4 C18.6,13.6 17,18.2 13.8,18.2 C10.6,18.2 9,13.6 12.2,11.4 Z" fill="#f4f4f4" stroke="#303030" stroke-width="1"/>
    <circle cx="13.8" cy="14.6" r="2.9" fill="#4a94cc"/>
    <path d="M13.8,4 V13" stroke="#4a94cc" stroke-width="1.4"/>
  </symbol>
  <symbol id="iCentri" viewBox="0 0 20 20">
    <path d="M1,13.6 C1,10.4 18.4,10.4 18.4,13.6 V15.6 C18.4,19.4 1,19.4 1,15.6 Z" fill="#f2f2f2" stroke="#303030"/>
    <path d="M1,13.6 C1,17 18.4,17 18.4,13.6" fill="none" stroke="#303030" stroke-width=".9"/>
    <path d="M7.2,4 C7.2,2.6 12,2.6 12,4 V13 C12,14.4 7.2,14.4 7.2,13 Z" fill="url(#gy)" stroke="#505050" stroke-width=".9"/>
    <path d="M5.4,2.4 C1,4 2,9.4 9.6,9.6 C15.6,9.6 18.4,6.4 16.4,3.4" fill="none" stroke="#2a86c8" stroke-width="1.7"/>
    <path d="M13.6,3.6 L18.2,0.6 L18.2,5.6 Z" fill="#2a86c8"/>
  </symbol>
  <symbol id="iMesh" viewBox="0 0 20 20">
    <path d="M1.1,8.3 L3.4,5.4 L6,4.8 L5.8,3.1 L9.5,1.2 L14.2,3.6 L13.4,8.2 L17.9,9.4 L17.9,14.6 L12.6,18.3 L1.6,11.5 Z" fill="url(#km)" stroke="#2e2e2e" stroke-width="1"/>
    <path d="M5.8,3.1 L10.2,5.6 L14.2,3.6 M10.2,5.6 V10.2 M6,4.8 L6.2,8.4 L10.2,10.2 L13.4,8.2 M1.1,8.3 L12.6,13.2 L17.9,9.4 M12.6,13.2 V18.3" fill="none" stroke="#2e2e2e" stroke-width=".6" opacity=".8"/>
    <path d="M8.2,4.6 L11.5,8 L18.7,0.4" fill="none" stroke="#0a7a1e" stroke-width="2.7"/>
  </symbol>
  <symbol id="iFolder" viewBox="0 0 20 20">
    <path d="M1.4,4.2 C1.4,3 2,2.6 3,2.6 H7 L8.6,4.6 H16.6 C17.6,4.6 18,5.2 18,6 V16.6 C18,17.6 17.4,18 16.6,18 H2.8 C1.8,18 1.4,17.4 1.4,16.6 Z" fill="#f4f4f4" stroke="#303030" stroke-width="1.1"/>
    <path d="M1.6,6.4 H17.8" stroke="#9a9a9a" stroke-width=".8"/>
    <path d="M6.2,8.4 H9.8 V12 H14.4 V16 H6.2 Z" fill="url(#rb)" stroke="#505050" stroke-width=".6"/>
  </symbol>
  <symbol id="iPlot" viewBox="0 0 20 20">
    <path d="M0.6,5 L4.6,2.8 L8.6,4 L8.6,9 L15.7,11.4 L15.7,15.4 L10.5,18.9 L0.6,14.6 Z" fill="url(#rb2)" stroke="#2a2a2a" stroke-width=".9"/>
    <path d="M0.6,5 L4.6,2.8 L8.6,4 L5,6.4 Z" fill="#ff2a1a"/>
    <path d="M10.5,14.4 L15.7,11.4 L15.7,15.4 L10.5,18.9 Z" fill="#1a5cf0"/>
    <path d="M0.6,5 L5,6.4 L5,11 L10.5,14.4 L15.7,11.4 M10.5,14.4 V18.9 M5,6.4 L8.6,4" fill="none" stroke="#2a2a2a" stroke-width=".7" opacity=".75"/>
    <text x="12.6" y="6.4" font-family="Liberation Sans, sans-serif" font-style="italic" font-size="8.6" fill="#000">u</text>
  </symbol>
</defs>
</svg>
<div id="hscroll"><div class="thumb"></div>
<svg style="position:absolute;left:0;top:0" width="254" height="9"><path d="M9.5,-3 L6,0.5 L9,3.6" fill="none" stroke="#404040" stroke-width="1.6"/><path d="M228,-3 L231.6,0.5 L228.6,3.6" fill="none" stroke="#404040" stroke-width="1.6"/></svg></div>
<div class="hline" style="top:9.5px"></div>
<div id="grip"></div>
<div class="hline" style="top:25.5px;height:1.5px"></div>
<div id="filter">
<svg style="position:absolute;left:0;top:0" width="40" height="24" viewBox="0 0 40 24">
  <path d="M2.4,3.6 H18.6 V5.6 L12.4,12.6 V19.6 L9,20.6 V12.6 L2.4,5.6 Z" fill="#f4f4f4" stroke="#303030" stroke-width="1.1"/>
  <path d="M2.4,3 H18.6 V6 H2.4 Z" fill="#2c82c0" stroke="#1c5c90" stroke-width=".8"/>
  <path d="M4,4.3 H14" stroke="#bfe0f8" stroke-width="1"/>
  <path d="M20.4,15 H25.6 L23,17.8 Z" fill="#202020"/>
</svg>
</div>
<div id="sel"></div>

<div class="row" style="top:53px"><svg class="ic" style="left:0px;top:1px;width:22px;height:20px"><use href="#iStudy"/></svg><span class="t" style="left:24px;letter-spacing:-0.134px;">Resonance Load (-Default-)</span></div>
<div class="row" style="top:75px"><i class="exp open" style="left:5px;top:9px"></i><svg class="ic" style="left:24px;top:1px;width:20px;height:20px"><use href="#iPart"/></svg><span class="t" style="left:47px;letter-spacing:-0.216px;">HDI Frequency</span></div>
<div class="row" style="top:97px"><i class="exp closed" style="left:30px;top:7.5px"></i><svg class="ic" style="left:47px;top:1px;width:20px;height:20px"><use href="#iBody"/></svg><span class="t" style="left:70px;letter-spacing:-0.188px;">SolidBody 1(Extrude4) (-Alloy Steel</span></div>
<div class="row" style="top:119px"><i class="exp closed" style="left:30px;top:7.5px"></i><svg class="ic" style="left:47px;top:1px;width:20px;height:20px"><use href="#iBody"/></svg><span class="t" style="left:70px;letter-spacing:-0.132px;">SolidBody 2(Split Line3) (-Alloy Steel</span></div>
<div class="row" style="top:141px"><i class="exp closed" style="left:30px;top:7.5px"></i><svg class="ic" style="left:47px;top:1px;width:20px;height:20px"><use href="#iBody"/></svg><span class="t" style="left:70px;letter-spacing:-0.054px;">SolidBody 3(CirPattern1[1]) (-Alloy Steel</span></div>
<div class="row" style="top:163px"><i class="exp closed" style="left:30px;top:7.5px"></i><svg class="ic" style="left:47px;top:1px;width:20px;height:20px"><use href="#iBody"/></svg><span class="t" style="left:70px;letter-spacing:-0.054px;">SolidBody 4(CirPattern1[3]) (-Alloy Steel</span></div>
<div class="row" style="top:185px"><i class="exp closed" style="left:30px;top:7.5px"></i><svg class="ic" style="left:47px;top:1px;width:20px;height:20px"><use href="#iBody"/></svg><span class="t" style="left:70px;letter-spacing:-0.054px;">SolidBody 5(CirPattern1[2]) (-Alloy Steel</span></div>
<div class="row" style="top:207px"><i class="exp open" style="left:5px;top:9px"></i><svg class="ic" style="left:24px;top:1px;width:20px;height:20px"><use href="#iConn"/></svg><span class="t" style="left:47px;letter-spacing:0.098px;">Connections</span></div>
<div class="row" style="top:229px"><i class="exp closed" style="left:30px;top:7.5px"></i><svg class="ic" style="left:47px;top:1px;width:20px;height:20px"><use href="#iContact"/></svg><span class="t" style="left:70px;letter-spacing:0.087px;">Component Contacts</span></div>
<div class="row" style="top:251px"><i class="exp open" style="left:5px;top:9px"></i><svg class="ic" style="left:24px;top:1px;width:20px;height:20px"><use href="#iFixt"/></svg><span class="t" style="left:47px;letter-spacing:-0.286px;">Fixtures</span></div>
<div class="row" style="top:273px"><svg class="ic" style="left:47px;top:1px;width:20px;height:20px"><use href="#iFixed"/></svg><span class="t" style="left:70px;letter-spacing:-0.345px;">Fixed-1</span></div>
<div class="row" style="top:295px"><i class="exp open" style="left:5px;top:9px"></i><svg class="ic" style="left:24px;top:1px;width:20px;height:20px"><use href="#iLoads"/></svg><span class="t" style="left:47px;letter-spacing:-0.34px;">External Loads</span></div>
<div class="row" style="top:317px"><svg class="ic" style="left:47px;top:1px;width:20px;height:20px"><use href="#iCentri"/></svg><span class="t" style="left:70px;letter-spacing:-0.122px;">Centrifugal-1 (:600 Hz:)</span></div>
<div class="row" style="top:339px"><i class="exp closed" style="left:7px;top:7.5px"></i><svg class="ic" style="left:24px;top:1px;width:20px;height:20px"><use href="#iMesh"/></svg><span class="t" style="left:47px;letter-spacing:-0.061px;">Mesh</span></div>
<div class="row" style="top:361px"><i class="exp open" style="left:5px;top:9px"></i><svg class="ic" style="left:24px;top:1px;width:20px;height:20px"><use href="#iFolder"/></svg><span class="t b" style="left:47px;letter-spacing:-0.366px;">Results</span></div>
<div class="row" style="top:383px"><svg class="ic" style="left:47px;top:1px;width:20px;height:20px"><use href="#iPlot"/></svg><span class="t b" style="left:70px;letter-spacing:-0.123px;">Amplitude1 (-Res Amp - Mode Shape Plot 1-)</span></div>
<div class="row" style="top:405px"><svg class="ic" style="left:47px;top:1px;width:20px;height:20px"><use href="#iPlot"/></svg><span class="t" style="left:70px;letter-spacing:-0.025px;">Amplitude2 (-Res Amp - Mode Shape Plot 2-)</span></div>
<div class="row" style="top:427px"><svg class="ic" style="left:47px;top:1px;width:20px;height:20px"><use href="#iPlot"/></svg><span class="t" style="left:70px;letter-spacing:-0.025px;">Amplitude3 (-Res Amp - Mode Shape Plot 3-)</span></div>
<div class="row" style="top:449px"><svg class="ic" style="left:47px;top:1px;width:20px;height:20px"><use href="#iPlot"/></svg><span class="t" style="left:70px;letter-spacing:-0.025px;">Amplitude4 (-Res Amp - Mode Shape Plot 4-)</span></div>
<div class="row" style="top:471px"><svg class="ic" style="left:47px;top:1px;width:20px;height:20px"><use href="#iPlot"/></svg><span class="t" style="left:70px;letter-spacing:-0.025px;">Amplitude5 (-Res Amp - Mode Shape Plot 5-)</span></div>
<div class="row" style="top:493px"><svg class="ic" style="left:47px;top:1px;width:20px;height:20px"><use href="#iPlot"/></svg><span class="t" style="left:70px;letter-spacing:-0.025px;">Amplitude6 (-Res Amp - Mode Shape Plot 6-)</span></div>
<div class="row" style="top:515px"><svg class="ic" style="left:47px;top:1px;width:20px;height:20px"><use href="#iPlot"/></svg><span class="t" style="left:70px;letter-spacing:-0.025px;">Amplitude7 (-Res Amp - Mode Shape Plot 7-)</span></div>
<div class="row" style="top:537px"><svg class="ic" style="left:47px;top:1px;width:20px;height:20px"><use href="#iPlot"/></svg><span class="t" style="left:70px;letter-spacing:-0.025px;">Amplitude8 (-Res Amp - Mode Shape Plot 8-)</span></div>
<div class="row" style="top:559px"><svg class="ic" style="left:47px;top:1px;width:20px;height:20px"><use href="#iPlot"/></svg><span class="t" style="left:70px;letter-spacing:-0.025px;">Amplitude9 (-Res Amp - Mode Shape Plot 9-)</span></div>
<div class="row" style="top:581px"><svg class="ic" style="left:47px;top:1px;width:20px;height:20px"><use href="#iPlot"/></svg><span class="t" style="left:70px;letter-spacing:-0.008px;">Amplitude10 (-Res Amp - Mode Shape Plot 10-)</span></div>
</div>
<div id="tab"></div>

<div id="dlg">
<!--DIALOG-->
<div id="title"><span>List Modes</span><svg style="position:absolute;left:0;top:0" width="405" height="30" viewBox="0 0 405 30"><path d="M286.5,14.5 H296.5" stroke="#fff" stroke-width="1"/><rect x="331.5" y="9.5" width="9" height="9" fill="none" stroke="#fff" stroke-width="1"/><path d="M377.5,9.5 L387,19 M387,9.5 L377.5,19" stroke="#fff" stroke-width="1.1"/></svg></div>
<div id="study">Study name:Resonance Load</div>
<div id="list">
<div class="hd" style="left:0px;width:63px"></div>
<span class="ht" style="left:9.6px;letter-spacing:-0.26px">Mode No.</span>
<div class="hd" style="left:64px;width:105px"></div>
<span class="ht" style="left:69.5px;letter-spacing:-0.1px">Frequency(Rad/sec)</span>
<div class="hd" style="left:170px;width:105px"></div>
<span class="ht" style="left:183.3px;letter-spacing:-0.29px">Frequency(Hertz)</span>
<div class="hd" style="left:276px;width:103px"></div>
<span class="ht" style="left:289.4px;letter-spacing:-0.27px">Period(Seconds)</span>
<div class="selc" style="left:0;top:16px;width:64px;height:15px"></div>
<div class="rl" style="top:31px"></div>
<span class="c w" style="left:29.2px;top:17px">1</span>
<span class="c" style="left:90.9px;top:17px">3,314.2</span>
<span class="c" style="left:197.9px;top:17px">527.47</span>
<span class="c" style="left:298.2px;top:17px">0.0018958</span>
<div class="rl" style="top:47px"></div>
<span class="c" style="left:29.2px;top:33px">2</span>
<span class="c" style="left:90.9px;top:33px">3,322.6</span>
<span class="c" style="left:197.9px;top:33px">528.82</span>
<span class="c" style="left:299.8px;top:33px">0.001891</span>
<div class="rl" style="top:63px"></div>
<span class="c" style="left:29.2px;top:49px">3</span>
<span class="c" style="left:104.4px;top:49px">4,945</span>
<span class="c" style="left:197.9px;top:49px">787.01</span>
<span class="c" style="left:298.2px;top:49px">0.0012706</span>
<div class="rl" style="top:79px"></div>
<span class="c" style="left:29.2px;top:65px">4</span>
<span class="c" style="left:90.9px;top:65px">6,872.5</span>
<span class="c" style="left:197.4px;top:65px">1,093.8</span>
<span class="c" style="left:296.9px;top:65px">0.00091425</span>
<div class="rl" style="top:95px"></div>
<span class="c" style="left:29.2px;top:81px">5</span>
<span class="c" style="left:90.9px;top:81px">7,083.6</span>
<span class="c" style="left:197.4px;top:81px">1,127.4</span>
<span class="c" style="left:296.9px;top:81px">0.00088701</span>
<div class="rl" style="top:111px"></div>
<span class="c" style="left:29.2px;top:97px">6</span>
<span class="c" style="left:104.4px;top:97px">7,117</span>
<span class="c" style="left:197.4px;top:97px">1,132.7</span>
<span class="c" style="left:296.9px;top:97px">0.00088285</span>
<div class="rl" style="top:127px"></div>
<span class="c" style="left:29.2px;top:113px">7</span>
<span class="c" style="left:90.9px;top:113px">8,573.8</span>
<span class="c" style="left:197.4px;top:113px">1,364.6</span>
<span class="c" style="left:296.9px;top:113px">0.00073283</span>
<div class="rl" style="top:143px"></div>
<span class="c" style="left:29.2px;top:129px">8</span>
<span class="c" style="left:90.9px;top:129px">9,056.9</span>
<span class="c" style="left:197.4px;top:129px">1,441.4</span>
<span class="c" style="left:296.9px;top:129px">0.00069375</span>
<div class="rl" style="top:159px"></div>
<span class="c" style="left:29.2px;top:145px">9</span>
<span class="c" style="left:101.4px;top:145px">11,310</span>
<span class="c" style="left:210.1px;top:145px">1,800</span>
<span class="c" style="left:296.9px;top:145px">0.00055554</span>
<div class="rl" style="top:175px"></div>
<span class="c" style="left:25.6px;top:161px">10</span>
<span class="c" style="left:101.4px;top:161px">11,342</span>
<span class="c" style="left:197.4px;top:161px">1,805.1</span>
<span class="c" style="left:296.9px;top:161px">0.00055399</span>
<div class="cl" style="left:64px"></div>
<div class="cl" style="left:170px"></div>
<div class="cl" style="left:276px"></div>
<div class="endl" style="top:175px"></div>
<div id="sb"><div class="thumb"></div><svg style="position:absolute;left:0;top:0" width="380" height="18" viewBox="0 0 380 18"><path d="M10.5,3.5 L6.5,7.5 L10.5,11.5" fill="none" stroke="#404040" stroke-width="1.7"/><path d="M368.5,3.5 L372.5,7.5 L368.5,11.5" fill="none" stroke="#404040" stroke-width="1.7"/><path d="M6.5,16.4 L11,18.4 M373,16.4 L368.5,18.4" fill="none" stroke="#404040" stroke-width="1.5"/></svg></div>
</div>
<div class="btn def" style="left:12px;top:340px;width:69px;height:17px;line-height:17px">Close</div>
<div class="btn" style="left:167px;top:340px">Save</div>
<div class="btn" style="left:297px;top:340px">Help</div>
</div>
</body>
</html>
